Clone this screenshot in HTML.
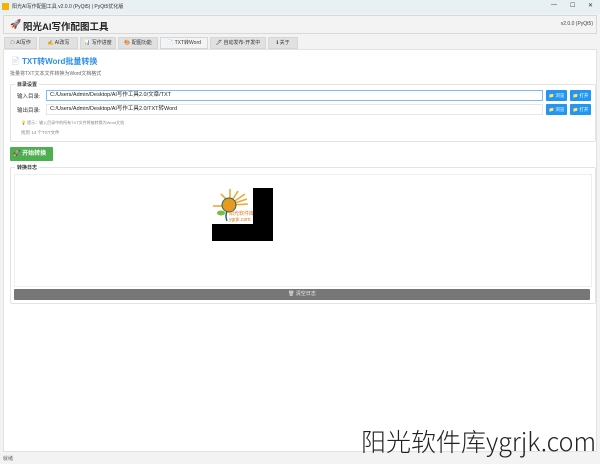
<!DOCTYPE html>
<html><head><meta charset="utf-8"><style>
*{box-sizing:border-box;margin:0;padding:0}
body{width:600px;height:464px;overflow:hidden;background:#f3f3f3;font-family:"Liberation Sans","Noto Sans CJK SC",sans-serif;font-size:6px;color:#333;position:relative}
.abs{position:absolute}
.tb{left:0;top:0;width:600px;height:14px;background:#e9f0f3;font-size:5px;color:#333}
.hdr{left:3px;top:15px;width:594px;height:19px;background:#f3f3f3;border:1px solid #d8d8d8}
.tab{top:37px;height:12px;background:#e1e1e1;border:1px solid #d6d6d6;font-size:5px;text-align:center;line-height:11px;color:#333}
.panel{left:3px;top:49px;width:594px;height:403px;background:#fff;border:1px solid #e2e2e2}
.grp{border:1px solid #e3e3e3;border-radius:2px}
.btn{background:#2196f3;color:#fff;font-size:4.5px;line-height:11px;text-align:center;border-radius:1px;height:11px;width:21px}
.inp{height:11px;border:1px solid #e6e6e6;font-size:5.5px;line-height:9px;padding-left:3px;color:#222;background:#fff}
</style></head><body>
<div class="abs tb"><span class="abs" style="left:2px;top:3px;width:7px;height:7px;background:#f5b400"></span><span class="abs" style="left:12px;top:3px">阳光AI写作配图工具 v2.0.0 (PyQt5) | PyQt5优化版</span>
<span class="abs" style="left:551px;top:2px;font-size:6px">—</span><span class="abs" style="left:570px;top:2px;font-size:6px">☐</span><span class="abs" style="left:588px;top:2px;font-size:6px">✕</span></div>
<div class="abs hdr"><span class="abs" style="left:6px;top:3px;font-size:9px;color:#e23">🚀</span><span class="abs" style="left:19px;top:3px;font-size:9.5px;font-weight:bold;color:#222">阳光AI写作配图工具</span><span class="abs" style="right:3px;top:5px;font-size:5px;color:#444">v2.0.0 (PyQt5)</span></div>
<div class="abs tab" style="left:4px;width:33px">☁ AI写作</div>
<div class="abs tab" style="left:39px;width:39px">✍ AI改写</div>
<div class="abs tab" style="left:80px;width:36px">📊 写作进度</div>
<div class="abs tab" style="left:118px;width:40px">🎨 配图功能</div>
<div class="abs tab" style="left:160px;width:48px;background:#f4f4f4">📄 TXT转Word</div>
<div class="abs tab" style="left:210px;width:56px">🖋 自动发布-开发中</div>
<div class="abs tab" style="left:268px;width:30px">ℹ 关于</div>
<div class="abs panel">
 <span class="abs" style="left:7px;top:7px;font-size:7px;color:#aaa">📄</span>
 <span class="abs" style="left:18px;top:6px;font-size:8px;font-weight:bold;color:#2d8fe6">TXT转Word批量转换</span>
 <span class="abs" style="left:6px;top:20px;font-size:5px;color:#666">批量将TXT文本文件转换为Word文档格式</span>
 <div class="abs grp" style="left:6px;top:34px;width:586px;height:58px">
  <span class="abs" style="left:4px;top:-4px;background:#fff;padding:0 2px;font-size:5px;font-weight:bold">目录设置</span>
  <span class="abs" style="left:6px;top:7px;font-size:5.5px">输入目录:</span>
  <div class="abs inp" style="left:35px;top:5px;width:497px;border-color:#7cbcf0">C:/Users/Admin/Desktop/AI写作工具2.0/文章/TXT</div>
  <div class="abs btn" style="left:535px;top:5px">📁 浏览</div><div class="abs btn" style="left:559px;top:5px">📁 打开</div>
  <span class="abs" style="left:6px;top:21px;font-size:5.5px">输出目录:</span>
  <div class="abs inp" style="left:35px;top:19px;width:497px">C:/Users/Admin/Desktop/AI写作工具2.0/TXT转Word</div>
  <div class="abs btn" style="left:535px;top:19px">📁 浏览</div><div class="abs btn" style="left:559px;top:19px">📁 打开</div>
  <span class="abs" style="left:10px;top:35px;font-size:4px;color:#888"><span style="color:#f5b400">💡</span> 提示：输入目录中的所有TXT文件将被转换为Word文档</span>
  <span class="abs" style="left:10px;top:45px;font-size:4.5px;color:#888">找到 14 个TXT文件</span>
 </div>
 <div class="abs" style="left:6px;top:97px;width:43px;height:14px;background:#4caf50;border-radius:1px;color:#fff;font-size:6px;font-weight:bold;line-height:14px;padding-left:3px">🚀 开始转换</div>
 <div class="abs grp" style="left:6px;top:117px;width:586px;height:137px">
  <span class="abs" style="left:4px;top:-4px;background:#fff;padding:0 2px;font-size:5px;font-weight:bold">转换日志</span>
  <div class="abs" style="left:3px;top:6px;width:578px;height:113px;border:1px solid #eee"></div>
  <div class="abs" style="left:3px;top:121px;width:576px;height:11px;background:#777;border-radius:1px;color:#eee;font-size:5px;text-align:center;line-height:11px">🗑 清空日志</div>
 </div>
 <div class="abs" style="left:208px;top:138px;width:61px;height:53px;background:#000"></div>
 <div class="abs" style="left:208px;top:138px;width:41px;height:36px;background:#fff">
  <svg width="41" height="36" viewBox="0 0 41 36">
   <g stroke="#f0a830" stroke-width="1.6"><line x1="18" y1="14" x2="18" y2="1"/><line x1="19" y1="14" x2="26" y2="3"/><line x1="20" y1="15" x2="33" y2="6"/><line x1="20" y1="16" x2="35" y2="11"/><line x1="20" y1="17" x2="36" y2="16"/><line x1="17" y1="14" x2="9" y2="6"/><line x1="15" y1="18" x2="1" y2="18"/></g>
   <ellipse cx="17" cy="17" rx="7" ry="7" fill="#e89a20" stroke="#1c6b6b" stroke-width="1"/>
   <path d="M15 23 Q13 28 15 33" stroke="#1c6b6b" stroke-width="1.5" fill="none"/>
   <ellipse cx="9" cy="25" rx="4" ry="2.5" fill="#7cbd3a"/>
   <text x="17" y="27" font-size="5" fill="#e07820" font-family="Noto Sans CJK SC">阳光软件库</text>
   <text x="17" y="33" font-size="5" fill="#e07820" font-family="Liberation Sans">ygrjk.com</text>
  </svg>
 </div>
</div>
<div class="abs" style="left:0;top:452px;width:600px;height:12px;background:#f3f3f3"><span class="abs" style="left:3px;top:3px;font-size:5px;color:#666">就绪</span></div>
<span class="abs" style="left:361px;top:423px;font-size:25px;color:#222;font-family:'Noto Sans CJK SC','Liberation Sans',sans-serif;font-weight:300;white-space:nowrap;line-height:36px">阳光软件库ygrjk.com</span>
</body></html>
